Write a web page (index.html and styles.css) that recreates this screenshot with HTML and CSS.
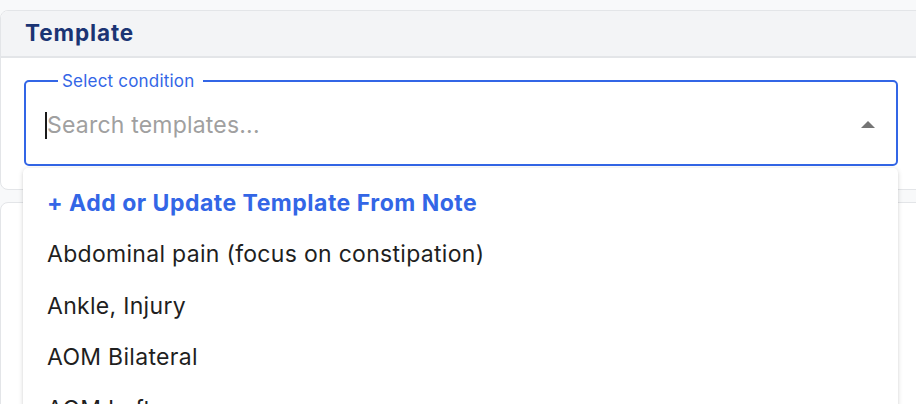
FILE: index.html
```html
<!DOCTYPE html>
<html>
<head>
<meta charset="utf-8">
<link rel="stylesheet" href="styles.css">
</head>
<body>
<div class="page">
  <section class="card">
    <div class="card-header">Template</div>
    <div class="card-body">
      <fieldset class="select">
        <legend class="select-label">Select condition</legend>
        <div class="select-row">
          <span class="caret"></span>
          <span class="placeholder">Search templates...</span>
          <span class="arrow"></span>
        </div>
      </fieldset>
    </div>
  </section>
  <section class="card card-next"></section>
  <ul class="menu">
    <li class="menu-item menu-add">+ Add or Update Template From Note</li>
    <li class="menu-item">Abdominal pain (focus on constipation)</li>
    <li class="menu-item">Ankle, Injury</li>
    <li class="menu-item">AOM Bilateral</li>
    <li class="menu-item">AOM Left</li>
  </ul>
</div>
</body>
</html>
```

FILE: styles.css
```css
html, body {
  margin: 0;
  padding: 0;
}
body {
  background: #f8f9fa;
  font-family: "Inter", "Noto Sans", sans-serif;
  width: 916px;
  height: 404px;
  overflow: hidden;
}
.page {
  position: relative;
  padding-top: 10px;
}
.card {
  width: 940px;
  background: #ffffff;
  border: 1px solid #e3e5e8;
  border-radius: 8px;
  box-sizing: border-box;
  overflow: hidden;
}
.card-header {
  height: 47px;
  background: #f3f4f6;
  border-bottom: 2px solid #e3e5e8;
  display: flex;
  align-items: center;
  padding-left: 24px;
  padding-bottom: 3px;
  box-sizing: border-box;
  font-size: 22.5px;
  font-weight: 700;
  letter-spacing: 0.9px;
  color: #1b3474;
}
.card-body {
  padding: 13px 0 23px 23px;
}
.select {
  margin: 0;
  width: 874px;
  box-sizing: border-box;
  border: 2px solid #3366e6;
  border-radius: 5px;
  padding: 0 21px 0 19px;
  min-width: 0;
}
.select-label {
  font-size: 17px;
  line-height: 20px;
  letter-spacing: 0.2px;
  color: #3366e6;
  padding: 0 8px 0 4px;
  margin-left: 13px;
}
.select-row {
  height: 68px;
  padding-bottom: 5px;
  display: flex;
  align-items: center;
}
.caret {
  width: 2px;
  height: 27px;
  background: #1a1a1a;
  margin-right: 0;
}
.placeholder {
  flex: 1;
  font-size: 23px;
  letter-spacing: 0.2px;
  color: #a0a0a0;
}
.arrow {
  width: 0;
  height: 0;
  border-left: 7px solid transparent;
  border-right: 7px solid transparent;
  border-bottom: 7px solid #757575;
  margin-top: -2px;
}
.card-next {
  margin-top: 12px;
  height: 260px;
}
.menu {
  position: absolute;
  left: 23px;
  top: 168px;
  width: 875px;
  height: 260px;
  margin: 0;
  padding: 9px 0 0;
  list-style: none;
  background: #ffffff;
  border-radius: 5px;
  box-shadow: 0 1px 5px rgba(0, 0, 0, 0.16), 0 2px 2px rgba(0, 0, 0, 0.06);
}
.menu-item {
  height: 51.5px;
  display: flex;
  align-items: center;
  padding-left: 24px;
  font-size: 23px;
  letter-spacing: 0.3px;
  color: #1f1f1f;
}
.menu-add {
  color: #3366e6;
  font-weight: 700;
  letter-spacing: 0.5px;
}
```
